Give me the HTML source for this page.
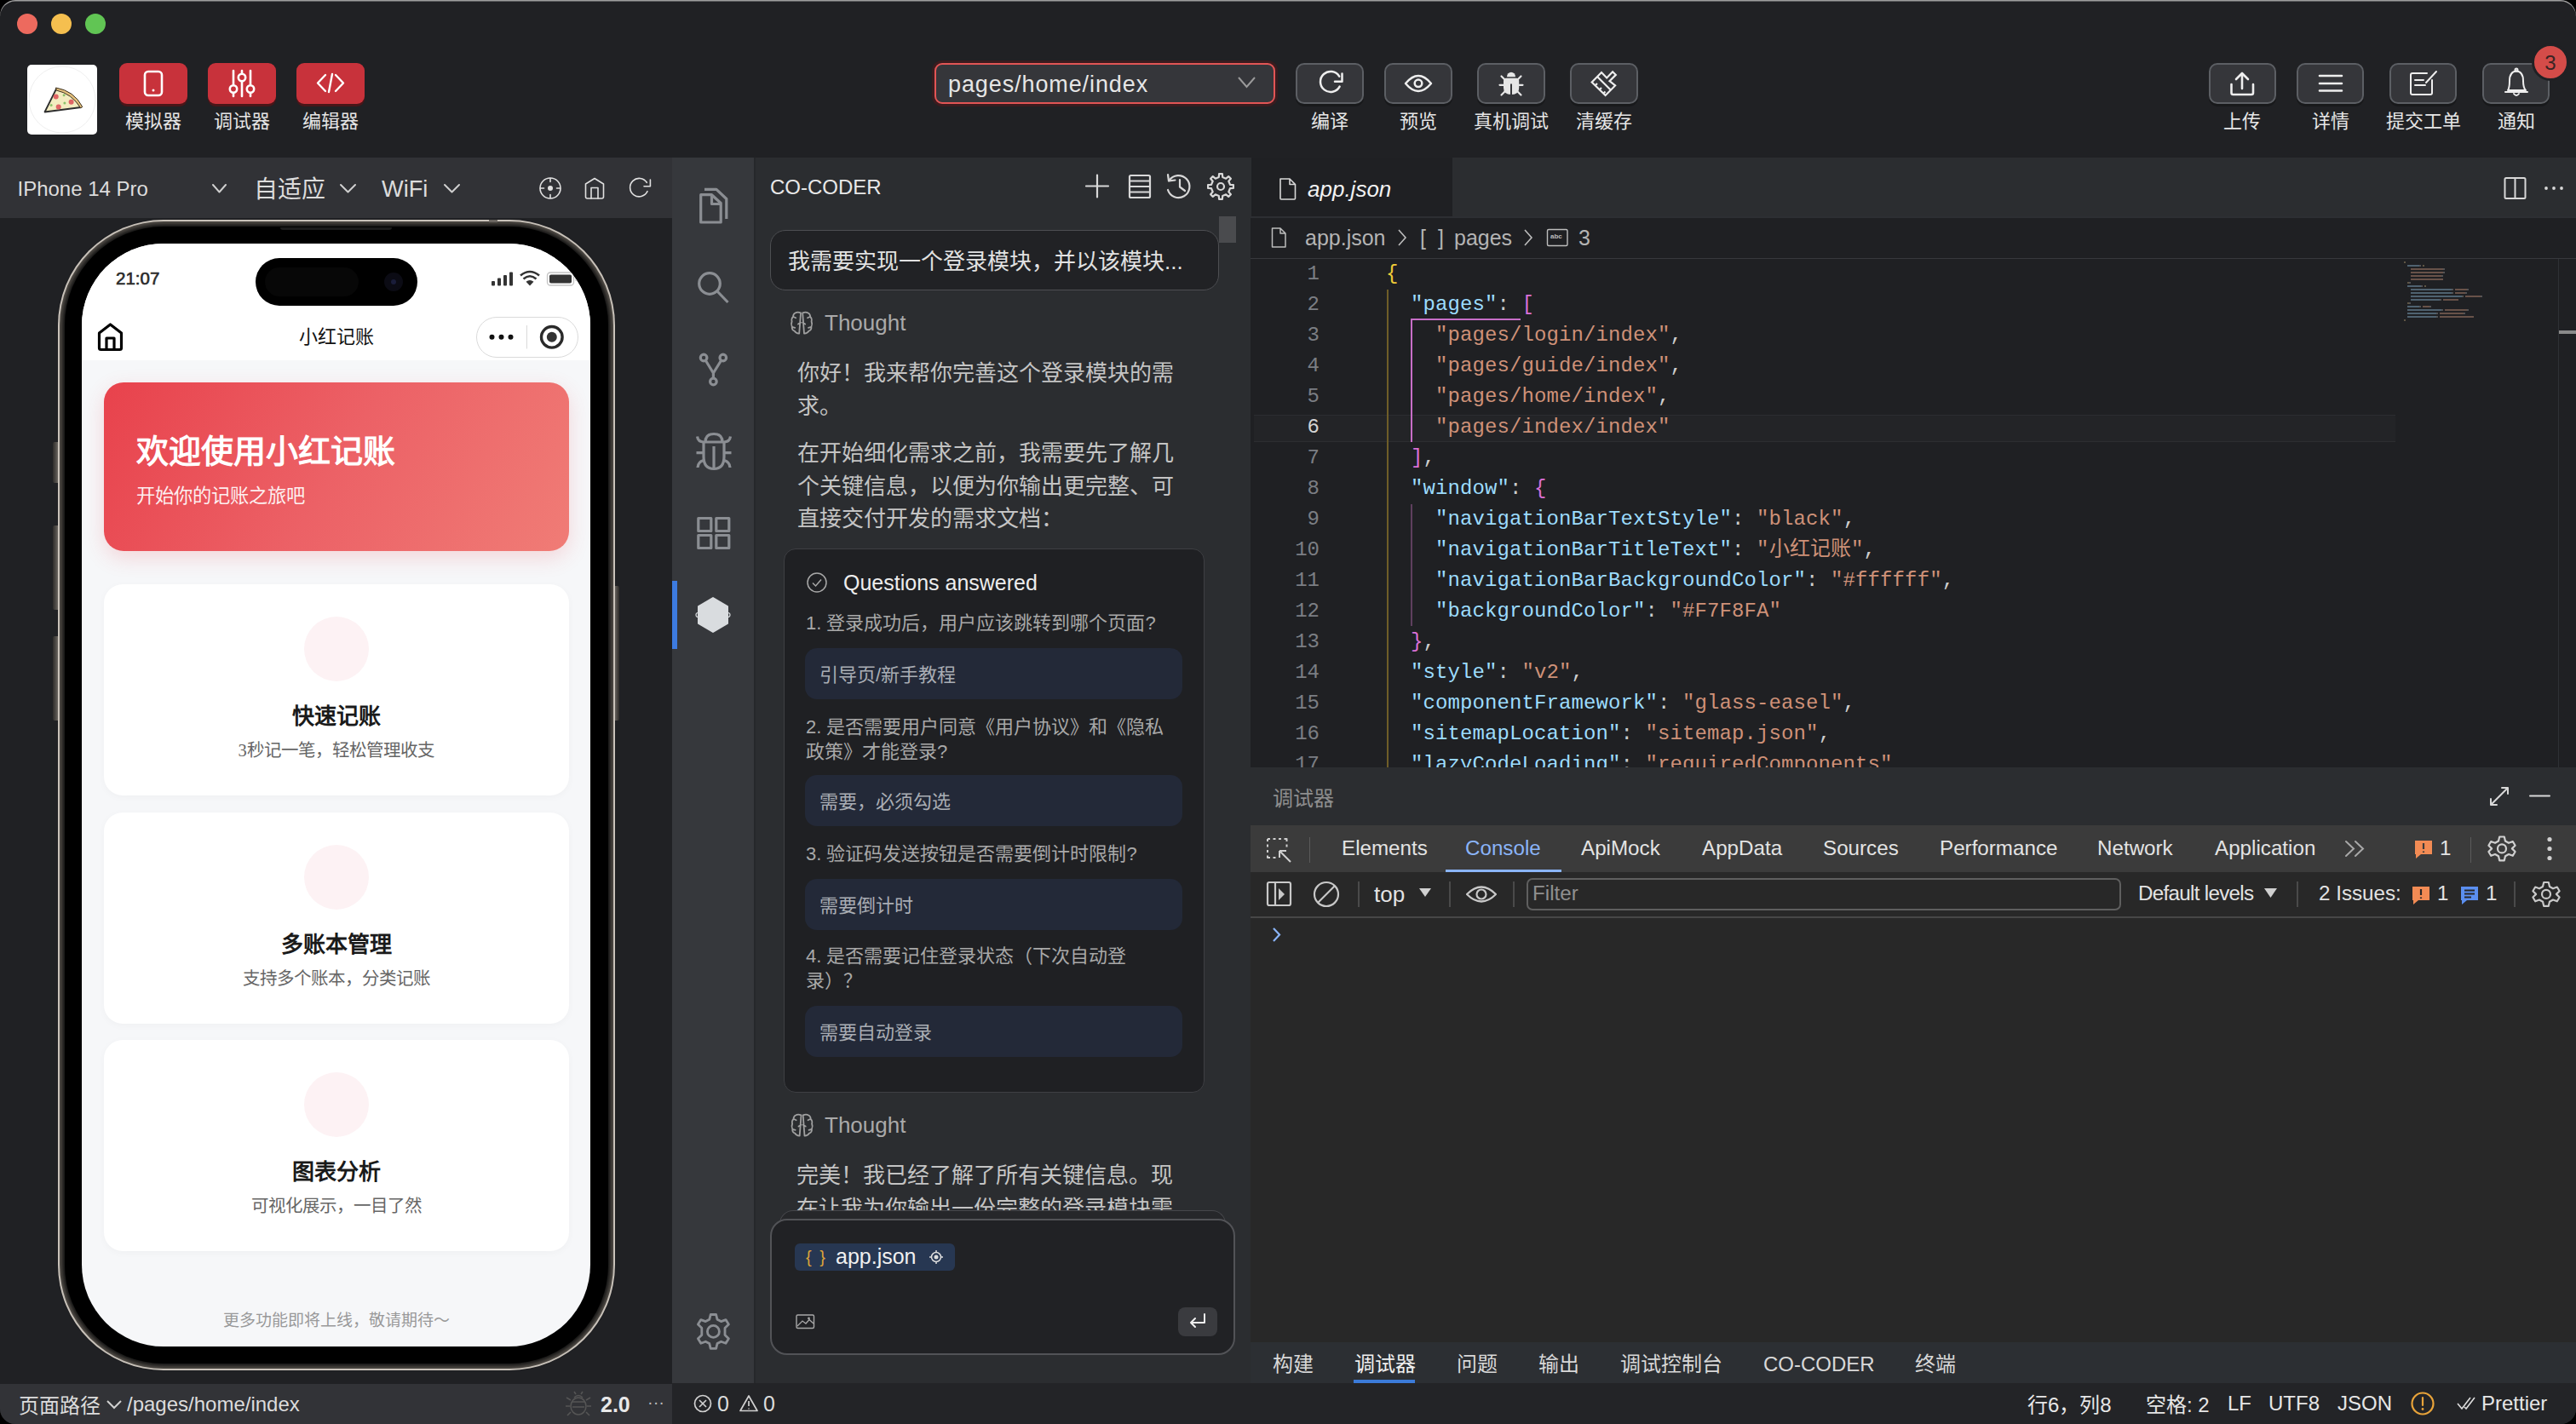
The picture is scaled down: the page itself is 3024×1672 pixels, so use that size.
<!DOCTYPE html>
<html lang="zh-CN"><head><meta charset="utf-8">
<style>
*{box-sizing:border-box;margin:0;padding:0}
html,body{width:3024px;height:1672px;overflow:hidden;background:#000}
body{font-family:"Liberation Sans",sans-serif;color:#ddd}
.a{position:absolute}
.t{position:absolute;white-space:nowrap;line-height:1}
#win{position:absolute;left:0;top:0;width:3024px;height:1672px;border-radius:18px;overflow:hidden;background:#202124}
.tl{position:absolute;top:16px;width:24px;height:24px;border-radius:50%}
.rbtn{position:absolute;top:74px;width:80px;height:48px;border-radius:9px;background:#c8323b;box-shadow:0 3px 0 #4a1619}
.gbtn{position:absolute;top:74px;width:80px;height:48px;border-radius:10px;background:#35363a;border:2px solid #5c5f64;box-shadow:0 3px 0 #18191b}
.lbl{position:absolute;top:129.5px;font-size:22px;line-height:26px;color:#e6e6e6;text-align:center;white-space:nowrap}
svg{position:absolute;overflow:visible}
.dt{top:984px;font-size:24.2px;color:#e3e3e3}
.bt{top:1590px;font-size:24px;color:#d8d8d8}
.qq{left:946px;font-size:22px;line-height:29px;color:#a8a8a8;white-space:nowrap}
.ans{left:945px;width:443px;height:60px;border-radius:14px;background:#232938;font-size:22px;line-height:63px;padding-left:17px;color:#a9adb4;white-space:nowrap}
.card{left:26px;width:546px;height:248px;border-radius:22px;background:#fff;box-shadow:0 2px 10px rgba(0,0,0,.03)}
.circ{left:261px;width:76px;height:76px;border-radius:50%;background:#fdf2f4}
.ctit{left:0;width:597px;text-align:center;font-family:'Liberation Serif',serif;font-size:26px;font-weight:bold;color:#1a1a1a}
.csub{left:0;width:597px;text-align:center;font-family:'Liberation Serif',serif;font-size:20.5px;color:#666}
</style></head><body>
<div id="win">

  <div class="tl" style="left:20px;background:#ed6a5e"></div>
  <div class="tl" style="left:60px;background:#f5bf4f"></div>
  <div class="tl" style="left:100px;background:#61c554"></div>

  <!-- TOOLBAR -->
  <div id="toolbar">
  <div class="a" style="left:32px;top:76px;width:82px;height:82px;border-radius:5px;background:#fff"></div>
  <svg style="left:32px;top:76px" width="82" height="82" viewBox="0 0 82 82">
    <circle cx="41" cy="41" r="39" fill="none" stroke="#efefef" stroke-width="1"/>
    <path d="M20.5 55.5 L34 28.5 Q53 32 63 50 Z" fill="#f3ecc0" stroke="#2e2e2e" stroke-width="1.8" stroke-linejoin="round"/>
    <path d="M33.5 27 Q55 30.5 64.8 49.5 L62.6 50.8 Q52.5 34 34.2 30 Z" fill="#e6c27e" stroke="#3a3020" stroke-width="1"/>
    <circle cx="33.7" cy="37.4" r="3" fill="#e06565"/><circle cx="51.6" cy="43.8" r="3" fill="#e06565"/><circle cx="36.7" cy="49.6" r="3" fill="#e06565"/>
    <circle cx="43.1" cy="35.7" r="1.5" fill="#8cc26a"/><circle cx="43.9" cy="45.1" r="1.5" fill="#8cc26a"/><circle cx="28.1" cy="47.6" r="1.5" fill="#8cc26a"/>
  </svg>
  <div class="rbtn" style="left:140px"></div>
  <div class="rbtn" style="left:244px"></div>
  <div class="rbtn" style="left:348px"></div>
  <svg style="left:0;top:0" width="10" height="10">
    <rect x="170" y="84" width="20" height="28" rx="4" fill="none" stroke="#fff" stroke-width="2.6"/>
    <circle cx="180" cy="106" r="1.5" fill="#fff"/>
    <g stroke="#fff" stroke-width="2.6" stroke-linecap="round" fill="#c8323b">
      <line x1="274" y1="83" x2="274" y2="113"/><line x1="284" y1="83" x2="284" y2="113"/><line x1="294" y1="83" x2="294" y2="113"/>
      <circle cx="274" cy="104.5" r="4.2"/><circle cx="284" cy="91" r="4.2"/><circle cx="294" cy="104.5" r="4.2"/>
    </g>
    <g stroke="#fff" stroke-width="2.4" stroke-linecap="round" stroke-linejoin="round" fill="none">
      <path d="M382 88 L373 97.5 L382 107"/><path d="M390 87 L386 108"/><path d="M394 88 L403 97.5 L394 107"/>
    </g>
  </svg>
  <div class="lbl" style="left:140px;width:80px">模拟器</div>
  <div class="lbl" style="left:244px;width:80px">调试器</div>
  <div class="lbl" style="left:348px;width:80px">编辑器</div>

  <!-- page dropdown -->
  <div class="a" style="left:1094px;top:71px;width:406px;height:54px;border-radius:12px;background:#3a1c1f"></div>
  <div class="a" style="left:1097px;top:74px;width:400px;height:48px;border-radius:9px;background:#35363a;border:2px solid #e25555"></div>
  <div class="t" style="left:1113px;top:86px;font-size:27px;letter-spacing:0.9px;color:#e6e6e6">pages/home/index</div>
  <svg style="left:0;top:0" width="10" height="10"><path d="M1454 91 L1463.5 102 L1473 91" fill="none" stroke="#9a9a9a" stroke-width="2"/></svg>

  <div class="gbtn" style="left:1521px"></div>
  <div class="gbtn" style="left:1625px"></div>
  <div class="gbtn" style="left:1734px"></div>
  <div class="gbtn" style="left:1843px"></div>
  <svg style="left:0;top:0" width="10" height="10">
    <g fill="none" stroke="#eee" stroke-width="2.5" stroke-linecap="round" stroke-linejoin="round">
      <path d="M1572.2 89.6 A12 12 0 1 0 1572.6 101.6"/><path d="M1575.5 86.5 L1575.5 95.8 L1567 95.8"/>
      <path d="M1650 98 Q1665 80 1680 98 Q1665 116 1650 98 Z"/><circle cx="1665" cy="97.8" r="4.3"/>
    </g>
    <g fill="#e6e6e6">
      <path d="M1769 90.2 A5 5.5 0 0 1 1779 90.2 Z"/>
      <path d="M1765 95 Q1765 91.8 1768 91.8 L1780 91.8 Q1783.2 91.8 1783.2 95 L1783.2 103 Q1783.2 111 1774 111 Q1765 111 1765 103 Z"/>
    </g>
    <path d="M1774 98.4 L1774 111" stroke="#35363a" stroke-width="2"/>
    <g stroke="#e6e6e6" stroke-width="2.2" stroke-linecap="round">
      <line x1="1762.5" y1="89.5" x2="1766" y2="93"/><line x1="1785.5" y1="89.5" x2="1782" y2="93"/>
      <line x1="1760.5" y1="99.8" x2="1765" y2="99.8"/><line x1="1787.5" y1="99.8" x2="1783" y2="99.8"/>
      <line x1="1762.5" y1="111.5" x2="1767" y2="107"/><line x1="1785.5" y1="111.5" x2="1781" y2="107"/>
    </g>
    <g fill="none" stroke="#eee" stroke-width="2.2" stroke-linejoin="miter">
      <path d="M1868.7 96.5 L1880 85 L1886.2 91.5 L1893.1 84.3 L1896.8 87.9 L1889.5 95.1 L1896.1 100.4 L1884.6 112 Z"/>
      <path d="M1875.3 90.2 L1891.2 106"/>
      <path d="M1872.5 100.5 L1875 98 M1877.5 105.5 L1880 103 M1882 110 L1884.5 107.5"/>
    </g>
  </svg>
  <div class="lbl" style="left:1521px;width:80px">编译</div>
  <div class="lbl" style="left:1625px;width:80px">预览</div>
  <div class="lbl" style="left:1714px;width:120px">真机调试</div>
  <div class="lbl" style="left:1843px;width:80px">清缓存</div>

  <div class="gbtn" style="left:2593px;width:79px"></div>
  <div class="gbtn" style="left:2696px;width:79px"></div>
  <div class="gbtn" style="left:2805px;width:79px"></div>
  <div class="gbtn" style="left:2914px;width:79px"></div>
  <svg style="left:0;top:0" width="10" height="10">
    <g fill="none" stroke="#eee" stroke-width="2.6" stroke-linecap="round" stroke-linejoin="round">
      <path d="M2632 86 L2632 104 M2625 93 L2632 86 L2639 93"/>
      <path d="M2619.5 99 L2619.5 109 Q2619.5 111 2621.5 111 L2643 111 Q2645 111 2645 109 L2645 99"/>
      <path d="M2723 89 L2749 89 M2723 98 L2749 98 M2723 106.5 L2749 106.5"/>
    </g>
    <g fill="none" stroke="#eee" stroke-width="2" stroke-linecap="round" stroke-linejoin="round">
      <path d="M2855 94 L2855 109 Q2855 111 2853 111 L2832 111 Q2830 111 2830 109 L2830 88 Q2830 86 2832 86 L2849 86"/>
      <path d="M2835 94 L2845 94 M2835 100 L2847 100 M2848 97 L2860 84"/>
      <path d="M2941 108 L2967 108 M2944 106 Q2946 103 2946 95 Q2946 84 2954 83.5 Q2962 84 2962 95 Q2962 103 2965 106 Z"/>
      <path d="M2951 110 Q2954 114 2957 110"/><circle cx="2954" cy="82" r="1.5"/>
    </g>
  </svg>
  <div class="lbl" style="left:2592px;width:80px">上传</div>
  <div class="lbl" style="left:2696px;width:80px">详情</div>
  <div class="lbl" style="left:2785px;width:120px">提交工单</div>
  <div class="lbl" style="left:2914px;width:80px">通知</div>
  <div class="a" style="left:2972px;top:51px;width:44px;height:44px;border-radius:50%;background:#d44c49;border:3px solid #202124"></div>
  <div class="t" style="left:2972px;top:62px;width:44px;text-align:center;font-size:24px;color:#3a2424">3</div>
</div>

  <!-- SIMULATOR -->
  <div id="sim">
  <div class="a" style="left:0;top:185px;width:789px;height:71px;background:#313236"></div>
  <div class="t" style="left:20.5px;top:210px;font-size:24px;color:#dcdcdc">IPhone 14 Pro</div>
  <div class="t" style="left:298px;top:208.5px;font-size:28px;color:#dcdcdc">自适应</div>
  <div class="t" style="left:448px;top:208px;font-size:27.2px;color:#dcdcdc">WiFi</div>
  <svg style="left:0;top:0" width="10" height="10">
    <g fill="none" stroke="#cfcfcf" stroke-width="2" stroke-linecap="round" stroke-linejoin="round">
      <path d="M250 217 L257.5 225.5 L265 217"/><path d="M400 217 L408.5 225.5 L417 217"/><path d="M522 217 L530.5 225.5 L539 217"/>
    </g>
    <g fill="none" stroke="#e0e0e0" stroke-width="1.6" stroke-linecap="round" stroke-linejoin="round">
      <circle cx="646" cy="221" r="12"/><path d="M646 209.5 L646 213.5 M646 228.5 L646 232.5 M634.5 221 L638.5 221 M653.5 221 L657.5 221"/>
      <path d="M687.5 216 L698 209.5 L708.5 216 L708.5 231 Q708.5 233 706.5 233 L689.5 233 Q687.5 233 687.5 231 Z"/><path d="M694 233 L694 220.5 L702 220.5 L702 233"/>
      <path d="M759.3 214.3 A10.7 10.7 0 1 0 760 224.7"/><path d="M763.4 211 L763.4 218.8 L756 218.8"/>
    </g>
    <circle cx="646" cy="221" r="3" fill="#e0e0e0"/>
  </svg>

  <!-- phone side buttons -->
  <div class="a" style="left:62px;top:519px;width:8px;height:48px;border-radius:2px;background:linear-gradient(90deg,#2e2c2a,#5c5853 60%,#8a847c)"></div>
  <div class="a" style="left:62px;top:617px;width:8px;height:99px;border-radius:2px;background:linear-gradient(90deg,#2e2c2a,#5c5853 60%,#8a847c)"></div>
  <div class="a" style="left:62px;top:747px;width:8px;height:99px;border-radius:2px;background:linear-gradient(90deg,#2e2c2a,#5c5853 60%,#8a847c)"></div>
  <div class="a" style="left:720px;top:688px;width:7px;height:158px;border-radius:2px;background:linear-gradient(90deg,#8a847c,#5c5853 40%,#2e2c2a)"></div>
  <!-- phone frame -->
  <div class="a" style="left:68px;top:258px;width:654px;height:1351px;border-radius:124px;background:#d3ccc3"></div>
  <div class="a" style="left:70px;top:260px;width:650px;height:1347px;border-radius:122px;background:#57524c"></div>
  <div class="a" style="left:76px;top:266px;width:638px;height:1335px;border-radius:116px;background:#000;box-shadow:0 0 5px 3px #111"></div>
  <div class="a" style="left:574px;top:258px;width:10px;height:3px;background:#6a6560"></div>
  <div class="a" style="left:329px;top:267px;width:131px;height:3px;border-radius:0 0 3px 3px;background:#1c1c1c"></div>
  <div id="screen" class="a" style="left:96px;top:286px;width:597px;height:1295px;border-radius:96px;overflow:hidden;background:#f6f7f9">
    <div class="a" style="left:0;top:0;width:597px;height:137px;background:#fff"></div>
    <div class="a" style="left:204px;top:17px;width:190px;height:56px;border-radius:28px;background:#000"></div>
    <div class="a" style="left:215px;top:28px;width:110px;height:34px;border-radius:17px;background:#070707"></div>
    <div class="a" style="left:355px;top:34px;width:22px;height:22px;border-radius:50%;background:#0b0b14"></div>
    <div class="a" style="left:363px;top:42px;width:6px;height:6px;border-radius:50%;background:#1a1d3a"></div>
    <div class="t" style="left:40px;top:31px;font-size:20.5px;color:#2a2a2a;-webkit-text-stroke:0.6px #2a2a2a">21:07</div>
    <svg style="left:0;top:0" width="10" height="10">
      <g fill="#333">
        <rect x="481" y="44" width="4" height="5.5" rx="1"/><rect x="488" y="40.5" width="4" height="9" rx="1"/><rect x="495" y="37" width="4" height="12.5" rx="1"/><rect x="502" y="33.5" width="4" height="16" rx="1"/>
        <path d="M526 49.5 L521.5 44.8 Q526 41 530.5 44.8 Z"/>
      </g>
      <g fill="none" stroke="#333" stroke-width="2.6" stroke-linecap="butt">
        <path d="M518.5 41.5 Q526 35 533.5 41.5"/><path d="M515 37.5 Q526 28.5 537 37.5"/>
      </g>
      <rect x="546.5" y="34" width="31" height="15" rx="3.5" fill="none" stroke="#c4c4c4" stroke-width="1.3"/>
      <rect x="549" y="36.5" width="26" height="10" rx="1.8" fill="#333"/>
      <path d="M579.5 39 L580.5 39 Q581.5 41.5 580.5 44 L579.5 44 Z" fill="#c4c4c4"/>
      <g fill="none" stroke="#000" stroke-width="3.2" stroke-linejoin="round">
        <path d="M20.5 105 L33.5 95 L46.5 105 L46.5 122.5 Q46.5 124.5 44.5 124.5 L22.5 124.5 Q20.5 124.5 20.5 122.5 Z"/>
        <path d="M29 124.5 L29 111 L38 111 L38 124.5"/>
      </g>
    </svg>
    <div class="t" style="left:199px;top:99px;width:200px;text-align:center;font-size:22px;color:#111">小红记账</div>
    <div class="a" style="left:463px;top:86px;width:120px;height:48px;border-radius:24px;background:rgba(255,255,255,.6);border:1px solid #dadada"></div>
    <svg style="left:0;top:0" width="10" height="10">
      <circle cx="481.5" cy="109.8" r="3" fill="#111"/><circle cx="492.5" cy="109.8" r="3" fill="#111"/><circle cx="503.5" cy="109.8" r="3" fill="#111"/>
      <line x1="522.4" y1="96" x2="522.4" y2="123.5" stroke="#d8d8d8" stroke-width="1"/>
      <circle cx="551.8" cy="109.8" r="12.3" fill="none" stroke="#2a2a2a" stroke-width="3.4"/><circle cx="551.8" cy="109.8" r="6" fill="#333"/>
    </svg>

    <div class="a" style="left:26px;top:163px;width:546px;height:198px;border-radius:23px;background:linear-gradient(120deg,#e8424c 0%,#ec6166 50%,#f07c76 100%);box-shadow:0 8px 24px rgba(232,66,76,.18)"></div>
    <div class="t" style="left:64px;top:224.5px;font-family:'Liberation Serif',serif;font-size:38px;font-weight:bold;color:#fff">欢迎使用小红记账</div>
    <div class="t" style="left:64px;top:285.5px;font-family:'Liberation Serif',serif;font-size:22.3px;color:rgba(255,255,255,.92)">开始你的记账之旅吧</div>

    <div class="a card" style="top:400px"></div>
    <div class="a card" style="top:668px"></div>
    <div class="a card" style="top:935px"></div>
    <div class="a circ" style="top:438px"></div>
    <div class="a circ" style="top:706px"></div>
    <div class="a circ" style="top:973px"></div>
    <div class="t ctit" style="top:542.5px">快速记账</div>
    <div class="t csub" style="top:584.5px">3秒记一笔，轻松管理收支</div>
    <div class="t ctit" style="top:810.5px">多账本管理</div>
    <div class="t csub" style="top:852.5px">支持多个账本，分类记账</div>
    <div class="t ctit" style="top:1077.5px">图表分析</div>
    <div class="t csub" style="top:1119.5px">可视化展示，一目了然</div>
    <div class="t" style="left:0;top:1255px;width:597px;text-align:center;font-family:'Liberation Serif',serif;font-size:19px;color:#999">更多功能即将上线，敬请期待～</div>
  </div>
</div>

  <!-- ACTIVITY BAR -->
  <div id="act">
  <div class="a" style="left:789px;top:185px;width:96px;height:1439px;background:#36383c"></div>
  <div class="a" style="left:789px;top:682px;width:6px;height:80px;background:#3d7be0"></div>
  <div class="a" style="left:885px;top:185px;width:2px;height:1439px;background:#26282b"></div>
  <svg style="left:0;top:0" width="10" height="10">
    <g fill="none" stroke="#8b8e93" stroke-width="3.2" stroke-linejoin="round">
      <path d="M822.7 228.7 L835.5 228.7 L846.2 238.5 L846.2 261 L822.7 261 Z"/><path d="M835.5 228.7 L835.5 239.5 L846.2 239.5"/><path d="M827 222.4 L841 222.4 L852.8 233.5 L852.8 257"/>
      <circle cx="833" cy="333" r="12.3"/><path d="M842 342 L854.5 355" stroke-linecap="butt"/>
      <circle cx="826.1" cy="420" r="3.8"/><circle cx="848.8" cy="420" r="3.8"/><circle cx="837.4" cy="448" r="3.8"/>
      <path d="M828.5 423.5 L837.4 438 L846.4 423.5 M837.4 438 L837.4 444"/>
      <path d="M828 519 Q828 509.5 838 509.5 Q848 509.5 848 519"/>
      <path d="M826 519 L826 536 Q826 550.5 838 550.5 Q850 550.5 850 536 L850 519"/>
      <path d="M838 524 L838 550.5 M817.5 531.6 L826 531.6 M850 531.6 L858.5 531.6"/>
      <path d="M819 549 Q819.5 542 826 540.5 M857 549 Q856.5 542 850 540.5"/>
      <path d="M818.5 512.5 Q819.5 519 826 519 L850 519 Q856.5 519 857.5 512.5"/>
      <rect x="819.8" y="608.5" width="15" height="15"/><rect x="840.8" y="608.5" width="15" height="15"/>
      <rect x="819.8" y="628.5" width="15" height="15"/><rect x="840.8" y="628.5" width="15" height="15"/>
    </g>
    <path d="M837 702 L854 712 L854 732 L837 742 L820 732 L820 712 Z" fill="#d9dcdf" stroke="#d9dcdf" stroke-width="2" stroke-linejoin="round"/><circle cx="819.5" cy="722" r="2.5" fill="none" stroke="#d9dcdf" stroke-width="1.2"/><circle cx="854.5" cy="722" r="2.5" fill="none" stroke="#d9dcdf" stroke-width="1.2"/>
    <g fill="none" stroke="#8b8e93" stroke-width="2.8">
      <path d="M834.2 1543.5 L840.6 1543.5 L842 1549.2 L846.5 1551.6 L852 1549.6 L855.4 1555 L851 1559.2 L851 1567.6 L855.4 1571.8 L852 1577.2 L846.5 1575.2 L842 1577.6 L840.6 1583.3 L834.2 1583.3 L832.8 1577.6 L828.3 1575.2 L822.8 1577.2 L819.4 1571.8 L823.8 1567.6 L823.8 1559.2 L819.4 1555 L822.8 1549.6 L828.3 1551.6 L832.8 1549.2 Z" stroke-linejoin="round"/>
      <circle cx="837.4" cy="1563.4" r="7"/>
    </g>
  </svg>
</div>

  <!-- CO-CODER -->
  <div id="cc">
  <div class="a" style="left:887px;top:185px;width:581px;height:1439px;background:#2b2d30"></div>
  <div class="t" style="left:904px;top:208px;font-size:24px;color:#e8e8e8">CO-CODER</div>
  <svg style="left:0;top:0" width="10" height="10">
    <g fill="none" stroke="#d8d8d8" stroke-width="2.2" stroke-linecap="round" stroke-linejoin="round">
      <path d="M1288 205.5 L1288 231.5 M1275 218.5 L1301 218.5"/>
      <rect x="1326" y="206" width="24" height="26" rx="1.5"/><path d="M1326 212.5 L1350 212.5 M1326 219 L1350 219 M1326 225.5 L1350 225.5"/>
      <path d="M1372.5 212 A13 13 0 1 1 1371 223"/><path d="M1371 205 L1372 212.5 L1379.5 211.5"/><path d="M1385 211 L1385 219.5 L1391 224"/>
    </g>
    <g fill="none" stroke="#d8d8d8" stroke-width="2.2" stroke-linejoin="round">
      <path d="M1430.8 208.0 L1431.1 204.1 L1434.9 204.1 L1435.2 208.0 L1439.2 209.7 L1442.2 207.1 L1444.9 209.8 L1442.3 212.8 L1444.0 216.8 L1447.9 217.1 L1447.9 220.9 L1444.0 221.2 L1442.3 225.2 L1444.9 228.2 L1442.2 230.9 L1439.2 228.3 L1435.2 230.0 L1434.9 233.9 L1431.1 233.9 L1430.8 230.0 L1426.8 228.3 L1423.8 230.9 L1421.1 228.2 L1423.7 225.2 L1422.0 221.2 L1418.1 220.9 L1418.1 217.1 L1422.0 216.8 L1423.7 212.8 L1421.1 209.8 L1423.8 207.1 L1426.8 209.7 Z"/>
      <circle cx="1433" cy="219" r="4"/>
    </g>
  </svg>
  <div class="a" style="left:1431px;top:254px;width:20px;height:31px;background:#4a4b4e"></div>

  <div class="a" style="left:904px;top:270px;width:527px;height:71px;border-radius:18px;background:#212225;border:1.5px solid #4d4e52"></div>
  <div class="t" style="left:925px;top:293.5px;font-size:26px;color:#e2e2e2">我需要实现一个登录模块，并以该模块...</div>

  <svg style="left:0;top:0" width="10" height="10">
    <g fill="none" stroke="#a0a0a0" stroke-width="1.8" stroke-linecap="round" stroke-linejoin="round">
      <path id="brain" d="M940 367.5 Q936.5 365.8 933.5 367.5 Q931.2 368.5 931 371.8 Q928.8 373.8 929.6 377.5 Q928.2 380.5 929.8 383.8 Q929.4 387.4 932.6 388.6 Q934.6 391.8 938.2 391.6 L940 367.5 M942.2 367.5 Q945.7 365.8 948.7 367.5 Q951.0 368.5 951.2 371.8 Q953.4 373.8 952.6 377.5 Q954.0 380.5 952.4 383.8 Q952.8 387.4 949.6 388.6 Q947.6 391.8 944.0 391.6 L942.2 367.5 M931 371.8 L934.2 373.2 M929.8 383.8 L933.2 384.8 M951.2 371.8 L948 373.2 M952.4 383.8 L949 384.8 M937 380.5 L940 378.8 M945.2 380.5 L942.2 378.8"/>
    </g>
  </svg>
  <div class="t" style="left:968px;top:366px;font-size:26px;color:#a9a9a9">Thought</div>
  <div class="a" style="left:936px;top:419px;font-size:26px;line-height:38.5px;color:#c4c4c4;white-space:nowrap">你好！我来帮你完善这个登录模块的需<br>求。</div>
  <div class="a" style="left:936px;top:513px;font-size:26px;line-height:38.5px;color:#c4c4c4;white-space:nowrap">在开始细化需求之前，我需要先了解几<br>个关键信息，以便为你输出更完整、可<br>直接交付开发的需求文档：</div>

  <div class="a" style="left:920px;top:644px;width:494px;height:639px;border-radius:14px;background:#1f2023;border:1.5px solid #3e3f43"></div>
  <svg style="left:0;top:0" width="10" height="10">
    <circle cx="959" cy="684" r="11" fill="none" stroke="#a8a8a8" stroke-width="1.5"/>
    <path d="M954 684.5 L957.5 688 L964 680.5" fill="none" stroke="#a8a8a8" stroke-width="1.5"/>
  </svg>
  <div class="t" style="left:990px;top:672px;font-size:25px;color:#ededed">Questions answered</div>
  <div class="a qq" style="top:717px">1. 登录成功后，用户应该跳转到哪个页面?</div>
  <div class="a ans" style="top:761px">引导页/新手教程</div>
  <div class="a qq" style="top:839px">2. 是否需要用户同意《用户协议》和《隐私<br>政策》才能登录?</div>
  <div class="a ans" style="top:910px">需要，必须勾选</div>
  <div class="a qq" style="top:988px">3. 验证码发送按钮是否需要倒计时限制?</div>
  <div class="a ans" style="top:1032px">需要倒计时</div>
  <div class="a qq" style="top:1108px">4. 是否需要记住登录状态（下次自动登<br>录）？</div>
  <div class="a ans" style="top:1181px">需要自动登录</div>

  <svg style="left:0;top:0" width="10" height="10">
    <use href="#brain" transform="translate(0.5,942)" fill="none" stroke="#a0a0a0" stroke-width="1.8" stroke-linecap="round" stroke-linejoin="round"/>
  </svg>
  <div class="t" style="left:968px;top:1308px;font-size:26px;color:#a9a9a9">Thought</div>
  <div class="a" style="left:0;top:0;width:3024px;height:1421px;overflow:hidden;pointer-events:none">
    <div class="a" style="left:935px;top:1361px;font-size:26px;line-height:38.5px;color:#c4c4c4;white-space:nowrap">完美！我已经了解了所有关键信息。现<br>在让我为你输出一份完整的登录模块需</div>
  </div>

  <div class="a" style="left:915px;top:1421px;width:524px;height:40px;border-radius:16px 16px 0 0;background:#26272a;border:1.5px solid #46474b;border-bottom:none"></div>
  <div class="a" style="left:904px;top:1431px;width:546px;height:160px;border-radius:20px;background:#212225;border:2px solid #525357"></div>
  <div class="a" style="left:933px;top:1460px;width:188px;height:32px;border-radius:6px;background:#273752"></div>
  <div class="t" style="left:946px;top:1466px;font-size:20px;color:#dca33a;letter-spacing:2px">{ }</div>
  <div class="t" style="left:981px;top:1463px;font-size:25px;color:#f0f0f0">app.json</div>
  <svg style="left:0;top:0" width="10" height="10">
    <circle cx="1099" cy="1476" r="5.5" fill="none" stroke="#ddd" stroke-width="1.5"/><circle cx="1099" cy="1476" r="2.5" fill="#ddd"/>
    <path d="M1099 1468 L1099 1470.5 M1099 1481.5 L1099 1484 M1091 1476 L1093.5 1476 M1104.5 1476 L1107 1476" stroke="#ddd" stroke-width="1.5"/>
    <rect x="935" y="1544" width="20.5" height="15.5" rx="1.5" fill="none" stroke="#a8a8a8" stroke-width="1.4"/>
    <path d="M936 1557 L942 1551 L946 1554 L950 1549.5 L955 1554" fill="none" stroke="#a8a8a8" stroke-width="1.3"/><circle cx="949.5" cy="1548" r="1.4" fill="#a8a8a8"/>
  </svg>
  <div class="a" style="left:1383px;top:1535px;width:46px;height:34px;border-radius:8px;background:#3a3b3f"></div>
  <svg style="left:0;top:0" width="10" height="10">
    <path d="M1414 1543 L1414 1553 L1398 1553 M1403 1548 L1398 1553 L1403 1558" fill="none" stroke="#f0f0f0" stroke-width="2" stroke-linecap="round" stroke-linejoin="round"/>
  </svg>
</div>

  <!-- EDITOR -->
  <div id="ed">
  <div class="a" style="left:1468px;top:185px;width:1556px;height:70px;background:#2b2d30"></div>
  <div class="a" style="left:1469px;top:185px;width:236px;height:70px;background:#1f2023"></div>
  <svg style="left:0;top:0" width="10" height="10">
    <path d="M1503 210 L1514 210 L1520.5 216.5 L1520.5 233 Q1520.5 234 1519.5 234 L1504 234 Q1503 234 1503 233 Z M1514 210 L1514 216.5 L1520.5 216.5" fill="none" stroke="#d8d8d8" stroke-width="1.6" stroke-linejoin="round"/>
  </svg>
  <div class="t" style="left:1535px;top:209px;font-size:26px;font-style:italic;color:#f2f2f2">app.json</div>
  <svg style="left:0;top:0" width="10" height="10">
    <rect x="2940.5" y="209" width="24" height="24" rx="1.5" fill="none" stroke="#d8d8d8" stroke-width="2"/>
    <line x1="2952.5" y1="209" x2="2952.5" y2="233" stroke="#d8d8d8" stroke-width="2"/>
    <circle cx="2989" cy="221" r="1.9" fill="#d8d8d8"/><circle cx="2998" cy="221" r="1.9" fill="#d8d8d8"/><circle cx="3007" cy="221" r="1.9" fill="#d8d8d8"/>
  </svg>

  <div class="a" style="left:1468px;top:255px;width:1556px;height:646px;background:#1f2023"></div>
  <div class="a" style="left:1468px;top:303px;width:1556px;height:1px;background:#37393d"></div>
  <div class="a" style="left:1468px;top:254px;width:1556px;height:2px;background:#2d2f33"></div>
  <svg style="left:0;top:0" width="10" height="10">
    <path d="M1493.5 268 L1503 268 L1509 274 L1509 290 L1493.5 290 Z M1503 268 L1503 274 L1509 274" fill="none" stroke="#bdbdbd" stroke-width="1.5" stroke-linejoin="round"/>
    <path d="M1642 270 L1650 279 L1642 288 M1790 270 L1798 279 L1790 288" fill="none" stroke="#bdbdbd" stroke-width="1.6"/>
    <rect x="1816.5" y="269.5" width="23.5" height="19" rx="1.5" fill="none" stroke="#bdbdbd" stroke-width="1.4"/>
  </svg>
  <div class="t" style="left:1820px;top:274px;font-size:8px;color:#bdbdbd;font-weight:bold">abc</div>
  <div class="t" style="left:1532px;top:267px;font-size:25px;color:#b4b4b4">app.json</div>
  <div class="t" style="left:1667px;top:267px;font-size:25px;color:#b4b4b4">[</div><div class="t" style="left:1688px;top:267px;font-size:25px;color:#b4b4b4">]</div><div class="t" style="left:1707px;top:267px;font-size:25px;color:#b4b4b4">pages</div>
  <div class="t" style="left:1853px;top:267px;font-size:25px;color:#b4b4b4">3</div>

  <!-- active line -->
  <div class="a" style="left:1472px;top:487px;width:1340px;height:32px;background:#232427;border-top:1px solid #2c2d31;border-bottom:1px solid #2c2d31"></div>
  <!-- guides -->
  <div class="a" style="left:1628px;top:340px;width:2px;height:561px;background:#6e5d28"></div>
  <div class="a" style="left:1656px;top:374px;width:2px;height:145px;background:#c76ec7"></div>
  <div class="a" style="left:1656px;top:374px;width:129px;height:2px;background:#c76ec7"></div>
  <div class="a" style="left:1656px;top:592px;width:2px;height:143px;background:#5e3f5e"></div>

  <div class="a" style="left:1468px;top:304px;width:1340px;height:597px;overflow:hidden">
    <div class="a" style="left:0;top:0px;width:81px;text-align:right;font-family:'Liberation Mono',monospace;font-size:24px;line-height:36px;color:#7b7e83">1<br>2<br>3<br>4<br>5<br><span style="color:#d4d4d4">6</span><br>7<br>8<br>9<br>10<br>11<br>12<br>13<br>14<br>15<br>16<br>17<br>18</div>
    <div class="a" style="left:159px;top:0px;font-family:'Liberation Mono',monospace;font-size:24px;letter-spacing:0.1px;line-height:36px;white-space:pre;color:#ccc"><span style="color:#f0cc38">{</span><br>  <span style="color:#9cdcfe">"pages"</span><span style="color:#cccccc">: </span><span style="color:#da70d6">[</span><br>    <span style="color:#ce9178">"pages/login/index"</span><span style="color:#cccccc">,</span><br>    <span style="color:#ce9178">"pages/guide/index"</span><span style="color:#cccccc">,</span><br>    <span style="color:#ce9178">"pages/home/index"</span><span style="color:#cccccc">,</span><br>    <span style="color:#ce9178">"pages/index/index"</span><br>  <span style="color:#da70d6">]</span><span style="color:#cccccc">,</span><br>  <span style="color:#9cdcfe">"window"</span><span style="color:#cccccc">: </span><span style="color:#da70d6">{</span><br>    <span style="color:#9cdcfe">"navigationBarTextStyle"</span><span style="color:#cccccc">: </span><span style="color:#ce9178">"black"</span><span style="color:#cccccc">,</span><br>    <span style="color:#9cdcfe">"navigationBarTitleText"</span><span style="color:#cccccc">: </span><span style="color:#ce9178">"小红记账"</span><span style="color:#cccccc">,</span><br>    <span style="color:#9cdcfe">"navigationBarBackgroundColor"</span><span style="color:#cccccc">: </span><span style="color:#ce9178">"#ffffff"</span><span style="color:#cccccc">,</span><br>    <span style="color:#9cdcfe">"backgroundColor"</span><span style="color:#cccccc">: </span><span style="color:#ce9178">"#F7F8FA"</span><br>  <span style="color:#da70d6">}</span><span style="color:#cccccc">,</span><br>  <span style="color:#9cdcfe">"style"</span><span style="color:#cccccc">: </span><span style="color:#ce9178">"v2"</span><span style="color:#cccccc">,</span><br>  <span style="color:#9cdcfe">"componentFramework"</span><span style="color:#cccccc">: </span><span style="color:#ce9178">"glass-easel"</span><span style="color:#cccccc">,</span><br>  <span style="color:#9cdcfe">"sitemapLocation"</span><span style="color:#cccccc">: </span><span style="color:#ce9178">"sitemap.json"</span><span style="color:#cccccc">,</span><br>  <span style="color:#9cdcfe">"lazyCodeLoading"</span><span style="color:#cccccc">: </span><span style="color:#ce9178">"requiredComponents"</span><br><span style="color:#f0cc38">}</span></div>
  </div>
  <div class="a" style="left:2822px;top:307px;width:2px;height:2px;background:#8a7a5a;opacity:.6"></div>
<div class="a" style="left:2826px;top:311px;width:14px;height:2px;background:#6f8fa3;opacity:.6"></div>
<div class="a" style="left:2840px;top:311px;width:2px;height:2px;background:#777;opacity:.6"></div>
<div class="a" style="left:2844px;top:311px;width:2px;height:2px;background:#8a7a5a;opacity:.6"></div>
<div class="a" style="left:2830px;top:315px;width:38px;height:2px;background:#9a7462;opacity:.6"></div>
<div class="a" style="left:2868px;top:315px;width:2px;height:2px;background:#777;opacity:.6"></div>
<div class="a" style="left:2830px;top:319px;width:38px;height:2px;background:#9a7462;opacity:.6"></div>
<div class="a" style="left:2868px;top:319px;width:2px;height:2px;background:#777;opacity:.6"></div>
<div class="a" style="left:2830px;top:323px;width:36px;height:2px;background:#9a7462;opacity:.6"></div>
<div class="a" style="left:2866px;top:323px;width:2px;height:2px;background:#777;opacity:.6"></div>
<div class="a" style="left:2830px;top:327px;width:38px;height:2px;background:#9a7462;opacity:.6"></div>
<div class="a" style="left:2826px;top:331px;width:2px;height:2px;background:#8a7a5a;opacity:.6"></div>
<div class="a" style="left:2828px;top:331px;width:2px;height:2px;background:#777;opacity:.6"></div>
<div class="a" style="left:2826px;top:335px;width:16px;height:2px;background:#6f8fa3;opacity:.6"></div>
<div class="a" style="left:2842px;top:335px;width:2px;height:2px;background:#777;opacity:.6"></div>
<div class="a" style="left:2846px;top:335px;width:2px;height:2px;background:#8a7a5a;opacity:.6"></div>
<div class="a" style="left:2830px;top:339px;width:48px;height:2px;background:#6f8fa3;opacity:.6"></div>
<div class="a" style="left:2878px;top:339px;width:2px;height:2px;background:#777;opacity:.6"></div>
<div class="a" style="left:2882px;top:339px;width:14px;height:2px;background:#9a7462;opacity:.6"></div>
<div class="a" style="left:2896px;top:339px;width:2px;height:2px;background:#777;opacity:.6"></div>
<div class="a" style="left:2830px;top:343px;width:48px;height:2px;background:#6f8fa3;opacity:.6"></div>
<div class="a" style="left:2878px;top:343px;width:2px;height:2px;background:#777;opacity:.6"></div>
<div class="a" style="left:2882px;top:343px;width:12px;height:2px;background:#9a7462;opacity:.6"></div>
<div class="a" style="left:2894px;top:343px;width:2px;height:2px;background:#777;opacity:.6"></div>
<div class="a" style="left:2830px;top:347px;width:60px;height:2px;background:#6f8fa3;opacity:.6"></div>
<div class="a" style="left:2890px;top:347px;width:2px;height:2px;background:#777;opacity:.6"></div>
<div class="a" style="left:2894px;top:347px;width:18px;height:2px;background:#9a7462;opacity:.6"></div>
<div class="a" style="left:2912px;top:347px;width:2px;height:2px;background:#777;opacity:.6"></div>
<div class="a" style="left:2830px;top:351px;width:34px;height:2px;background:#6f8fa3;opacity:.6"></div>
<div class="a" style="left:2864px;top:351px;width:2px;height:2px;background:#777;opacity:.6"></div>
<div class="a" style="left:2868px;top:351px;width:18px;height:2px;background:#9a7462;opacity:.6"></div>
<div class="a" style="left:2826px;top:355px;width:2px;height:2px;background:#8a7a5a;opacity:.6"></div>
<div class="a" style="left:2828px;top:355px;width:2px;height:2px;background:#777;opacity:.6"></div>
<div class="a" style="left:2826px;top:359px;width:14px;height:2px;background:#6f8fa3;opacity:.6"></div>
<div class="a" style="left:2840px;top:359px;width:2px;height:2px;background:#777;opacity:.6"></div>
<div class="a" style="left:2844px;top:359px;width:8px;height:2px;background:#9a7462;opacity:.6"></div>
<div class="a" style="left:2852px;top:359px;width:2px;height:2px;background:#777;opacity:.6"></div>
<div class="a" style="left:2826px;top:363px;width:40px;height:2px;background:#6f8fa3;opacity:.6"></div>
<div class="a" style="left:2866px;top:363px;width:2px;height:2px;background:#777;opacity:.6"></div>
<div class="a" style="left:2870px;top:363px;width:26px;height:2px;background:#9a7462;opacity:.6"></div>
<div class="a" style="left:2896px;top:363px;width:2px;height:2px;background:#777;opacity:.6"></div>
<div class="a" style="left:2826px;top:367px;width:34px;height:2px;background:#6f8fa3;opacity:.6"></div>
<div class="a" style="left:2860px;top:367px;width:2px;height:2px;background:#777;opacity:.6"></div>
<div class="a" style="left:2864px;top:367px;width:28px;height:2px;background:#9a7462;opacity:.6"></div>
<div class="a" style="left:2892px;top:367px;width:2px;height:2px;background:#777;opacity:.6"></div>
<div class="a" style="left:2826px;top:371px;width:34px;height:2px;background:#6f8fa3;opacity:.6"></div>
<div class="a" style="left:2860px;top:371px;width:2px;height:2px;background:#777;opacity:.6"></div>
<div class="a" style="left:2864px;top:371px;width:40px;height:2px;background:#9a7462;opacity:.6"></div>
<div class="a" style="left:2822px;top:375px;width:2px;height:2px;background:#8a7a5a;opacity:.6"></div>
  <div class="a" style="left:3003px;top:304px;width:1px;height:597px;background:#2e3034"></div>
  <div class="a" style="left:3004px;top:388px;width:20px;height:4px;background:#8a8a8a"></div>
</div>

  <!-- DEBUGGER -->
  <div id="dbg">
  <div class="a" style="left:1468px;top:901px;width:1556px;height:68px;background:#2b2d30"></div>
  <div class="t" style="left:1494px;top:925.5px;font-size:24px;color:#8e8e8e">调试器</div>
  <svg style="left:0;top:0" width="10" height="10">
    <g fill="none" stroke="#d8d8d8" stroke-width="2" stroke-linecap="round" stroke-linejoin="round">
      <path d="M2924 945 L2944 925 M2937 925 L2944 925 L2944 932 M2924 938 L2924 945 L2931 945"/>
      <path d="M2970 934.5 L2993 934.5"/>
    </g>
  </svg>
  <div class="a" style="left:1468px;top:969px;width:1556px;height:55px;background:#3b3b3b"></div>
  <div class="a" style="left:1697px;top:1021px;width:136px;height:3px;background:#8ab4f8"></div>
  <div class="a" style="left:1537px;top:983px;width:1px;height:30px;background:#5a5a5a"></div>
  <div class="a" style="left:2900px;top:983px;width:1px;height:30px;background:#5a5a5a"></div>
  <div class="t dt" style="left:1575px">Elements</div>
  <div class="t dt" style="left:1720px;color:#8ab4f8">Console</div>
  <div class="t dt" style="left:1856px">ApiMock</div>
  <div class="t dt" style="left:1998px">AppData</div>
  <div class="t dt" style="left:2140px">Sources</div>
  <div class="t dt" style="left:2277px">Performance</div>
  <div class="t dt" style="left:2462px">Network</div>
  <div class="t dt" style="left:2600px">Application</div>
  <svg style="left:0;top:0" width="10" height="10">
    <g fill="none" stroke="#d0d0d0" stroke-width="2" stroke-linejoin="round">
      <path d="M1488 985 L1488 988 M1488 991.5 L1488 994.5 M1488 998 L1488 1001 M1488 1004.5 L1488 1007 L1491 1007 M1494.5 1007 L1497.5 1007"/>
      <path d="M1488 985 L1491 985 M1494.5 985 L1497.5 985 M1501 985 L1504 985 M1507.5 985 L1510.5 985 L1510.5 988 M1510.5 991.5 L1510.5 994.5"/>
      <path d="M1502 999 L1515 1012 M1502 999 L1502 1007 M1502 999 L1510 999"/>
    </g>
    <g fill="none" stroke="#a8a8a8" stroke-width="2" stroke-linecap="round">
      <path d="M2754 988 L2763 996.5 L2754 1005 M2765 988 L2774 996.5 L2765 1005"/>
    </g>
    <path d="M2835 987 L2855 987 L2855 1003 L2842 1003 L2836 1008 L2836 1003 L2835 1003 Z" fill="#f28b54"/>
    <path d="M2845 990 L2845 997 M2845 999.5 L2845 1001" stroke="#3b3b3b" stroke-width="2.2"/>
    <g fill="none" stroke="#d0d0d0" stroke-width="2.2" stroke-linejoin="round">
      <path d="M2934.2 982.5 L2939.8 982.5 L2941 987.5 L2945 989.8 L2949.8 988 L2952.6 992.8 L2948.9 996.4 L2952.6 1000 L2949.8 1004.8 L2945 1003 L2941 1005.3 L2939.8 1010.3 L2934.2 1010.3 L2933 1005.3 L2929 1003 L2924.2 1004.8 L2921.4 1000 L2925.1 996.4 L2921.4 992.8 L2924.2 988 L2929 989.8 L2933 987.5 Z"/>
      <circle cx="2937" cy="996.4" r="5"/>
    </g>
    <circle cx="2993" cy="985.5" r="2.6" fill="#d0d0d0"/><circle cx="2993" cy="996.5" r="2.6" fill="#d0d0d0"/><circle cx="2993" cy="1007.5" r="2.6" fill="#d0d0d0"/>
  </svg>
  <div class="t dt" style="left:2864px">1</div>

  <div class="a" style="left:1468px;top:1024px;width:1556px;height:552px;background:#282828"></div>
  <div class="a" style="left:1468px;top:1076px;width:1556px;height:2px;background:#474747"></div>
  <div class="a" style="left:1594px;top:1035px;width:2px;height:30px;background:#4a4a4a"></div>
  <div class="a" style="left:1701px;top:1035px;width:2px;height:30px;background:#4a4a4a"></div>
  <div class="a" style="left:1776px;top:1035px;width:2px;height:30px;background:#4a4a4a"></div>
  <div class="a" style="left:2696px;top:1035px;width:2px;height:30px;background:#4a4a4a"></div>
  <div class="a" style="left:2951px;top:1035px;width:2px;height:30px;background:#4a4a4a"></div>
  <div class="a" style="left:1792px;top:1031px;width:698px;height:38px;border-radius:7px;border:2px solid #5f5f5f"></div>
  <div class="t dt" style="left:1799px;top:1037px;color:#8f8f8f">Filter</div>
  <div class="t dt" style="left:1613px;top:1037px;font-size:26px">top</div>
  <div class="t dt" style="left:2510px;top:1037px;letter-spacing:-0.7px">Default levels</div>
  <div class="t dt" style="left:2722px;top:1037px">2 Issues:</div>
  <div class="t dt" style="left:2861px;top:1037px">1</div>
  <div class="t dt" style="left:2918px;top:1037px">1</div>
  <svg style="left:0;top:0" width="10" height="10">
    <g fill="none" stroke="#c8c8c8" stroke-width="2.2" stroke-linejoin="round">
      <rect x="1488" y="1036" width="27" height="27" rx="2"/><path d="M1497 1036 L1497 1063"/>
      <circle cx="1557" cy="1050" r="14"/><path d="M1547 1060 L1567 1040"/>
      <path d="M1722 1050 Q1739 1033 1756 1050 Q1739 1067 1722 1050 Z"/><circle cx="1739" cy="1050" r="5.5"/>
    </g>
    <path d="M1501 1043 L1508 1050 L1501 1057 Z" fill="#c8c8c8"/>
    <path d="M1666 1043 L1680 1043 L1673 1053 Z" fill="#d0d0d0"/>
    <path d="M2658 1043 L2673 1043 L2665.5 1054 Z" fill="#d0d0d0"/>
    <path d="M2832 1041 L2852 1041 L2852 1057 L2839 1057 L2833 1062 L2833 1057 L2832 1057 Z" fill="#f28b54"/>
    <path d="M2842 1044 L2842 1051 M2842 1053.5 L2842 1055" stroke="#282828" stroke-width="2.2"/>
    <path d="M2889 1041 L2909 1041 L2909 1057 L2896 1057 L2890 1062 L2890 1057 L2889 1057 Z" fill="#5b8ff0"/>
    <path d="M2893 1045.5 L2905 1045.5 M2893 1049.5 L2905 1049.5 M2893 1053.5 L2901 1053.5" stroke="#282828" stroke-width="1.8"/>
    <g fill="none" stroke="#c8c8c8" stroke-width="2.2" stroke-linejoin="round">
      <path d="M2986.2 1036 L2991.8 1036 L2993 1041 L2997 1043.3 L3001.8 1041.5 L3004.6 1046.3 L3000.9 1049.9 L3004.6 1053.5 L3001.8 1058.3 L2997 1056.5 L2993 1058.8 L2991.8 1063.8 L2986.2 1063.8 L2985 1058.8 L2981 1056.5 L2976.2 1058.3 L2973.4 1053.5 L2977.1 1049.9 L2973.4 1046.3 L2976.2 1041.5 L2981 1043.3 L2985 1041 Z"/>
      <circle cx="2989" cy="1049.9" r="5"/>
    </g>
    <path d="M1495 1090 L1502 1097.5 L1495 1105" fill="none" stroke="#8ab4f8" stroke-width="2.2"/>
  </svg>

  <div class="a" style="left:1468px;top:1576px;width:1556px;height:48px;background:#2c2f33"></div>
  <div class="a" style="left:1589px;top:1620px;width:72px;height:4px;background:#3b7bd9"></div>
  <div class="t bt" style="left:1494px">构建</div>
  <div class="t bt" style="left:1590px;color:#f0f0f0">调试器</div>
  <div class="t bt" style="left:1710px">问题</div>
  <div class="t bt" style="left:1806px">输出</div>
  <div class="t bt" style="left:1902px">调试控制台</div>
  <div class="t bt" style="left:2070px">CO-CODER</div>
  <div class="t bt" style="left:2248px">终端</div>
</div>

  <!-- STATUS BAR -->
  <div id="status">
  <div class="a" style="left:0;top:1625px;width:789px;height:47px;background:#323337"></div>
  <div class="a" style="left:789px;top:1624px;width:2235px;height:48px;background:#232427"></div>
  <div class="t" style="left:22px;top:1639px;font-size:24px;color:#dcdcdc">页面路径</div>
  <svg style="left:0;top:0" width="10" height="10"><path d="M126 1645 L134 1653 L142 1645" fill="none" stroke="#d0d0d0" stroke-width="2"/></svg>
  <div class="t" style="left:149px;top:1637px;font-size:24px;color:#dcdcdc">/pages/home/index</div>
  <svg style="left:0;top:0" width="10" height="10">
    <g fill="none" stroke="#555" stroke-width="1.6">
      <ellipse cx="679" cy="1651" rx="9" ry="10"/><path d="M671 1646 L687 1646 M672 1652 L686 1652 M674 1641 Q679 1636 684 1641"/>
      <path d="M670 1644 L665 1641 M688 1644 L693 1641 M669 1651 L664 1651 M689 1651 L694 1651 M670 1658 L666 1662 M688 1658 L692 1662 M676 1637 L674 1634 M682 1637 L684 1634"/>
    </g>
  </svg>
  <div class="t" style="left:705px;top:1637px;font-size:25px;font-weight:bold;color:#e8e8e8">2.0</div>
  <div class="t" style="left:760px;top:1636px;font-size:20px;color:#bbb">···</div>

  <svg style="left:0;top:0" width="10" height="10">
    <g fill="none" stroke="#d0d0d0" stroke-width="1.7">
      <circle cx="825" cy="1648" r="9.5"/><path d="M821 1644 L829 1652 M829 1644 L821 1652"/>
      <path d="M879 1639 L889 1656.5 L869 1656.5 Z" stroke-linejoin="round"/><path d="M879 1645 L879 1651 M879 1653.5 L879 1654.5"/>
    </g>
  </svg>
  <div class="t" style="left:842px;top:1636px;font-size:25px;color:#dcdcdc">0</div>
  <div class="t" style="left:896px;top:1636px;font-size:25px;color:#dcdcdc">0</div>

  <div class="t" style="left:2380px;top:1637.5px;font-size:24px;color:#e6e6e6">行6，列8</div>
  <div class="t" style="left:2519px;top:1637.5px;font-size:24px;color:#e6e6e6">空格: 2</div>
  <div class="t" style="left:2615px;top:1636px;font-size:24px;color:#e6e6e6">LF</div>
  <div class="t" style="left:2663px;top:1636px;font-size:24px;color:#e6e6e6">UTF8</div>
  <div class="t" style="left:2744px;top:1636px;font-size:24px;color:#e6e6e6">JSON</div>
  <svg style="left:0;top:0" width="10" height="10">
    <circle cx="2844" cy="1648" r="12.5" fill="none" stroke="#e8a33a" stroke-width="2.2"/>
    <path d="M2844 1641 L2844 1650" stroke="#e8a33a" stroke-width="2.2" stroke-linecap="round"/><circle cx="2844" cy="1654.5" r="1.4" fill="#e8a33a"/>
    <path d="M2885 1648 L2890 1654 L2900 1641 M2893 1652 L2895 1654 L2905 1641" fill="none" stroke="#ddd" stroke-width="1.6"/>
  </svg>
  <div class="t" style="left:2913px;top:1636px;font-size:24px;color:#e6e6e6">Prettier</div>
</div>
  <div class="a" style="left:0;top:0;width:3024px;height:60px;border-radius:18px 18px 0 0;box-shadow:inset 0 1.6px 0 #9e9e9e;pointer-events:none"></div>
</div>
</body></html>
